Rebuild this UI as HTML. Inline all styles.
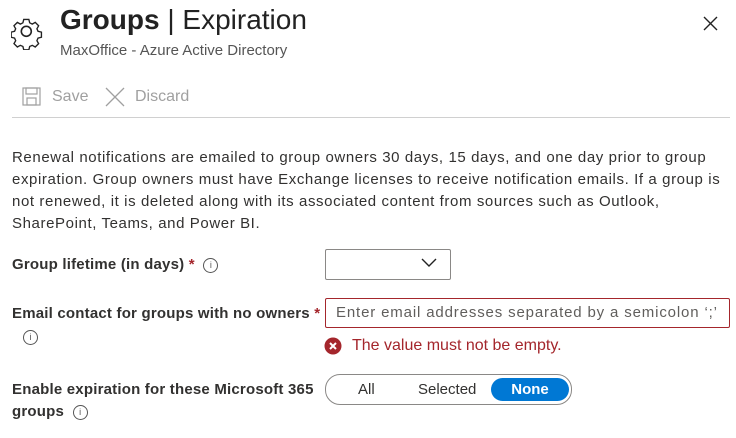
<!DOCTYPE html>
<html><head><style>
body{margin:0;width:736px;height:438px;background:#fff;font-family:"Liberation Sans",sans-serif;color:#323130;position:relative;overflow:hidden}
.a{position:absolute;white-space:nowrap}
.lbl{font-size:15px;font-weight:bold;color:#323130;letter-spacing:0.2px}
.req{color:#a4262c}
.info{display:inline-block;width:13px;height:13px;border:1px solid #555;border-radius:50%;font-size:9px;text-align:center;line-height:13px;font-weight:normal;color:#555;vertical-align:middle}
</style></head><body>
<svg class="a" style="left:11px;top:16px" width="34" height="34" viewBox="0 0 34 34" fill="none" stroke="#222" stroke-width="1.6"><path d="M14 3h6l1 4 3 1.5 3.5-2 4 4-2 3.5 1.3 3 4 1v6l-4 1-1.3 3 2 3.5-4 4-3.5-2-3 1.3-1 4h-6l-1-4-3-1.3-3.5 2-4-4 2-3.5-1.3-3-4-1v-6l4-1 1.3-3-2-3.5 4-4 3.5 2 3-1.5z" transform="scale(0.85) translate(1,1)"/><circle cx="15.3" cy="15.3" r="5"/></svg>
<div class="a" style="left:60px;top:4px;font-size:28px;color:#222"><b>Groups</b> <span style="font-weight:300">| Expiration</span></div>
<div class="a" style="left:60px;top:42px;font-size:15px;color:#555">MaxOffice - Azure Active Directory</div>
<svg class="a" style="left:703px;top:16px" width="15" height="15" viewBox="0 0 15 15" stroke="#222" stroke-width="1.4"><path d="M1 1L14 14M14 1L1 14"/></svg>
<svg class="a" style="left:22px;top:87px" width="20" height="20" viewBox="0 0 20 20" fill="none" stroke="#a0a0a0" stroke-width="1.2"><rect x="1" y="1" width="17" height="17"/><rect x="4" y="1" width="11" height="6"/><rect x="5" y="11" width="9" height="7"/></svg>
<div class="a" style="left:52px;top:88px;font-size:16px;color:#a0a0a0">Save</div>
<svg class="a" style="left:105px;top:87px" width="20" height="20" viewBox="0 0 20 20" stroke="#a0a0a0" stroke-width="1.3"><path d="M1 1L19 19M19 1L1 19"/></svg>
<div class="a" style="left:135px;top:88px;font-size:16px;color:#a0a0a0">Discard</div>
<div class="a" style="left:12px;top:117px;width:718px;height:1px;background:#d0d0d0"></div>
<div class="a" style="left:12px;top:147px;font-size:15px;line-height:22px;letter-spacing:0.6px;color:#323130">Renewal notifications are emailed to group owners 30 days, 15 days, and one day prior to group<br>expiration. Group owners must have Exchange licenses to receive notification emails. If a group is<br>not renewed, it is deleted along with its associated content from sources such as Outlook,<br>SharePoint, Teams, and Power BI.</div>
<div class="a lbl" style="left:12px;top:256px">Group lifetime (in days) <span class="req">*</span> &nbsp;<span class="info">i</span></div>
<div class="a" style="left:325px;top:249px;width:124px;height:29px;border:1px solid #8a8886;border-radius:2px"></div>
<svg class="a" style="left:421px;top:258px" width="16" height="10" viewBox="0 0 16 10" fill="none" stroke="#222" stroke-width="1.4"><path d="M1 1l7 7 7-7"/></svg>
<div class="a lbl" style="left:12px;top:305px">Email contact for groups with no owners <span class="req">*</span></div>
<div class="a" style="left:23px;top:329px"><span class="info">i</span></div>
<div class="a" style="left:325px;top:298px;height:28px;border:1px solid #a4262c;border-radius:2px;font-size:15px;letter-spacing:0.85px;color:#605e5c;line-height:28px;padding-left:10px;width:393px;overflow:hidden">Enter email addresses separated by a semicolon ‘;’</div>
<svg class="a" style="left:324px;top:337px" width="18" height="18" viewBox="0 0 18 18"><circle cx="9" cy="9" r="8.5" fill="#a4262c"/><path d="M6 6l6 6M12 6l-6 6" stroke="#fff" stroke-width="2"/></svg>
<div class="a" style="left:352px;top:337px;font-size:16px;color:#a4262c">The value must not be empty.</div>
<div class="a lbl" style="left:12px;top:381px">Enable expiration for these Microsoft 365</div>
<div class="a lbl" style="left:12px;top:403px">groups &nbsp;<span class="info">i</span></div>
<div class="a" style="left:325px;top:374px;width:245px;height:29px;border:1px solid #8a8886;border-radius:15px"></div>
<div class="a" style="left:358px;top:381px;font-size:15px">All</div>
<div class="a" style="left:418px;top:381px;font-size:15px">Selected</div>
<div class="a" style="left:491px;top:378px;width:78px;height:23px;background:#0078d4;border-radius:12px;color:#fff;font-size:15px;font-weight:bold;text-align:center;line-height:23px">None</div>
</body></html>
